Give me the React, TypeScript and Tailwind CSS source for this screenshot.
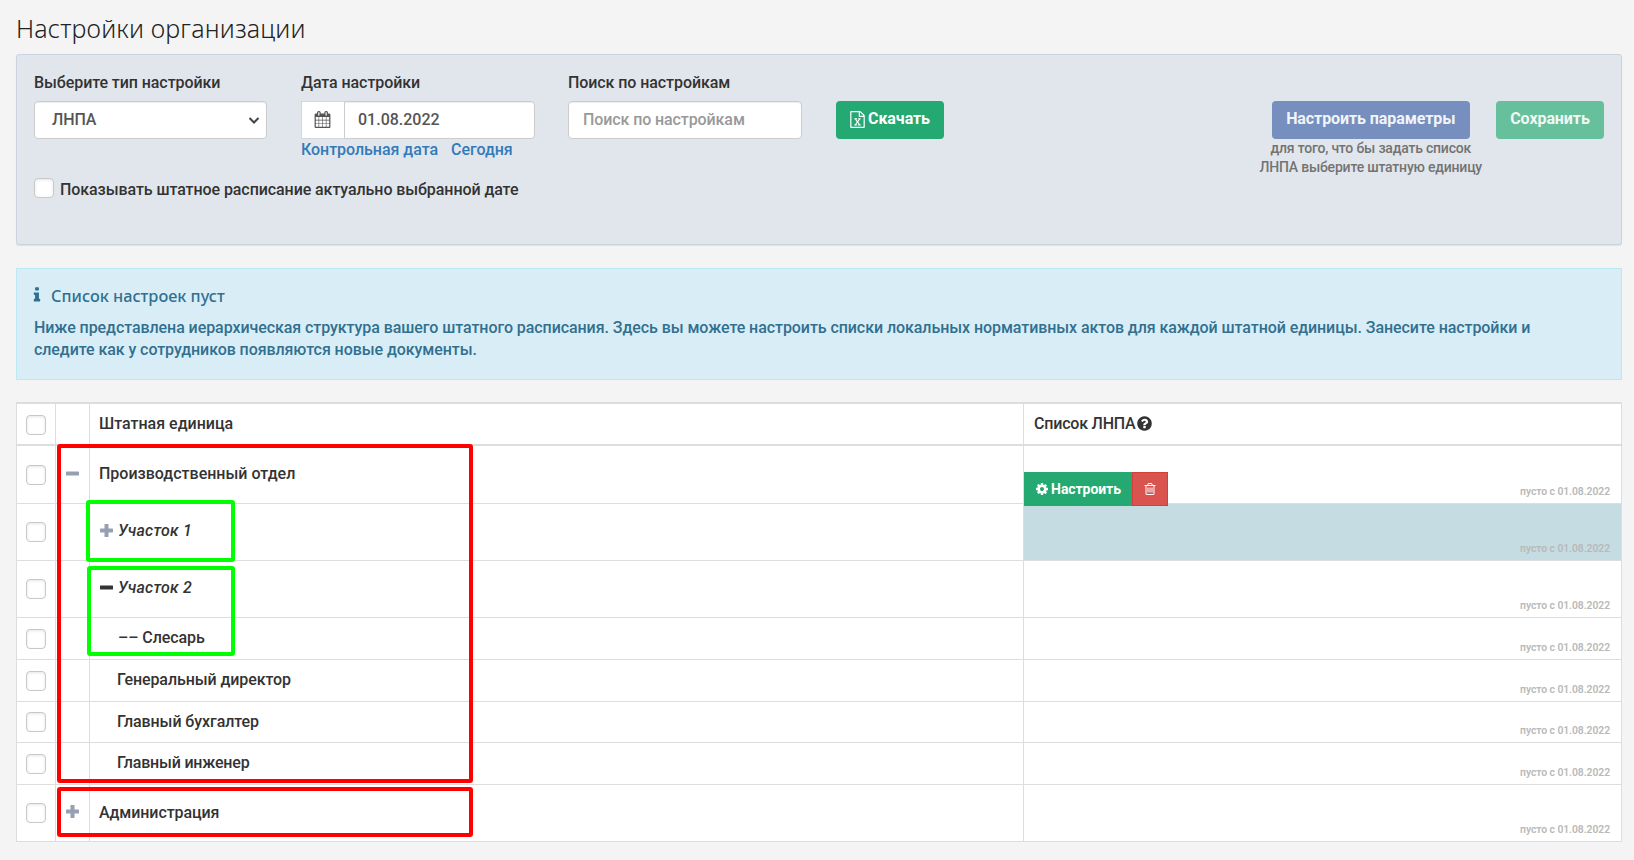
import type { ReactNode } from 'react';

const PATHS = {
  calendar:
    'M192 1664h288v-288h-288v288zm352 0h320v-288h-320v288zm-352-352h288v-320h-288v320zm352 0h320v-320h-320v320zm-352-384h288v-288h-288v288zm736 736h320v-288h-320v288zm-384-736h320v-288h-320v288zm768 736h288v-288h-288v288zm-384-352h320v-320h-320v320zm-352-864v-288q0-13-9.5-22.5t-22.5-9.5h-64q-13 0-22.5 9.5t-9.5 22.5v288q0 13 9.5 22.5t22.5 9.5h64q13 0 22.5-9.5t9.5-22.5zm736 864h288v-320h-288v320zm-384-384h320v-288h-320v288zm384 0h288v-288h-288v288zm32-480v-288q0-13-9.5-22.5t-22.5-9.5h-64q-13 0-22.5 9.5t-9.5 22.5v288q0 13 9.5 22.5t22.5 9.5h64q13 0 22.5-9.5t9.5-22.5zm384-64v1280q0 52-38 90t-90 38h-1408q-52 0-90-38t-38-90v-1280q0-52 38-90t90-38h128v-96q0-66 47-113t113-47h64q66 0 113 47t47 113v96h384v-96q0-66 47-113t113-47h64q66 0 113 47t47 113v96h128q52 0 90 38t38 90z',
  excel:
    'M1596 380q28 28 48 76t20 88v1152q0 40-28 68t-68 28h-1344q-40 0-68-28t-28-68v-1600q0-40 28-68t68-28h896q40 0 88 20t76 48zm-444-244v376h376q-10-29-22-41l-313-313q-12-12-41-22zm384 1528v-1024h-416q-40 0-68-28t-28-68v-416h-768v1536h1280zm-979-234v106h281v-106h-75l103-161q5-7 10-16.5t7.5-13.5 3.5-4h2q1 4 5 10 2 4 4.5 7.5t6 8 6.5 8.5l107 161h-76v106h291v-106h-68l-192-273 195-282h67v-107h-279v107h74l-103 159q-4 7-10 16.5t-9 13.5l-2 3h-2q-1-4-5-10-6-11-17-23l-106-159h76v-107h-290v107h68l189 272-194 283h-68z',
  info: 'M1216 1344v128q0 26-19 45t-45 19h-512q-26 0-45-19t-19-45v-128q0-26 19-45t45-19h64v-384h-64q-26 0-45-19t-19-45v-128q0-26 19-45t45-19h384q26 0 45 19t19 45v576h64q26 0 45 19t19 45zm-128-1152v192q0 26-19 45t-45 19h-256q-26 0-45-19t-19-45v-192q0-26 19-45t45-19h256q26 0 45 19t19 45z',
  question:
    'M1024 1376v-192q0-14-9-23t-23-9h-192q-14 0-23 9t-9 23v192q0 14 9 23t23 9h192q14 0 23-9t9-23zm256-672q0-88-55.5-163t-138.5-116-170-41q-243 0-371 213-15 24 8 42l132 100q7 6 19 6 16 0 25-12 53-68 86-92 34-24 86-24 48 0 85.5 26t37.5 59q0 38-20 61t-68 45q-63 28-115.5 86.5t-52.5 125.5v36q0 14 9 23t23 9h192q14 0 23-9t9-23q0-19 21.5-49.5t54.5-49.5q32-18 49-28.5t46-35 44.5-48 28-60.5 12.5-81zm384 192q0 209-103 385.5t-279.5 279.5-385.5 103-385.5-103-279.5-279.5-103-385.5 103-385.5 279.5-279.5 385.5-103 385.5 103 279.5 279.5 103 385.5z',
  cog: 'M1152 896q0-106-75-181t-181-75-181 75-75 181 75 181 181 75 181-75 75-181zm512-109v222q0 12-8 23t-20 13l-185 28q-19 54-39 91 35 50 107 138 10 12 10 25t-9 23q-27 37-99 108t-94 71q-12 0-26-9l-138-108q-44 23-91 38-16 136-29 186-7 28-36 28h-222q-14 0-24.5-8.5t-11.5-21.5l-28-184q-49-16-90-37l-141 107q-10 9-25 9-14 0-25-11-126-114-165-168-7-10-7-23 0-12 8-23 15-21 51-66.5t54-70.5q-27-50-41-99l-183-27q-13-2-21-12.5t-8-23.5v-222q0-12 8-23t19-13l186-28q14-46 39-92-40-57-107-138-10-12-10-24 0-10 9-23 26-36 98.5-107.5t94.5-71.5q13 0 26 10l138 107q44-23 91-38 16-136 29-186 7-28 36-28h222q14 0 24.5 8.5t11.5 21.5l28 184q49 16 90 37l142-107q9-9 24-9 13 0 25 10 129 119 165 170 7 8 7 22 0 12-8 23-15 21-51 66.5t-54 70.5q26 50 41 98l183 28q13 2 21 12.5t8 23.5z',
  trash:
    'M704 736v576q0 14-9 23t-23 9h-64q-14 0-23-9t-9-23v-576q0-14 9-23t23-9h64q14 0 23 9t9 23zm256 0v576q0 14-9 23t-23 9h-64q-14 0-23-9t-9-23v-576q0-14 9-23t23-9h64q14 0 23 9t9 23zm256 0v576q0 14-9 23t-23 9h-64q-14 0-23-9t-9-23v-576q0-14 9-23t23-9h64q14 0 23 9t9 23zm128 724v-948h-896v948q0 22 7 40.5t14.5 27 10.5 8.5h832q3 0 10.5-8.5t14.5-27 7-40.5zm-672-1076h448l-48-117q-7-9-17-11h-317q-10 2-17 11zm928 32v64q0 14-9 23t-23 9h-96v948q0 83-47 143.5t-113 60.5h-832q-66 0-113-58.5t-47-141.5v-952h-96q-14 0-23-9t-9-23v-64q0-14 9-23t23-9h309l70-167q15-37 54-63t79-26h320q40 0 79 26t54 63l70 167h309q14 0 23 9t9 23z',
};

interface IconProps {
  name: keyof typeof PATHS;
  className?: string;
}

const Icon = ({ name, className }: IconProps) => (
  <svg className={className} viewBox="0 0 1792 1792" fill="currentColor">
    <path d={PATHS[name]} />
  </svg>
);

const Toggle = ({ open, className }: { open: boolean; className?: string }) => (
  <svg className={className} viewBox="0 0 13 13" width="13" height="13" fill="currentColor">
    <rect x="0" y="4.5" width="13" height="4" rx="0.6" />
    {!open && <rect x="4.5" y="0" width="4" height="13" rx="0.6" />}
  </svg>
);

const Checkbox = ({ className = '' }: { className?: string }) => (
  <span
    className={`block size-5 shrink-0 rounded-[4px] border border-[#c8c8c8] bg-white shadow-[inset_0_1px_3px_rgba(0,0,0,0.1)] ${className}`}
  />
);

interface Row {
  title: string;
  height: string;
  toggle?: 'open' | 'closed';
  name: ReactNode;
  pad: string;
  active?: boolean;
}

const rows: Row[] = [
  {
    title: 'dept',
    height: 'h-[58px]',
    toggle: 'open',
    name: 'Производственный отдел',
    pad: 'pl-[9px] pb-[2px] tracking-normal',
  },
  {
    title: 'area-1',
    height: 'h-[57px]',
    name: (
      <>
        <Toggle open={false} className="mr-[5px] mb-px text-[#97a0b3]" />
        <em className="tracking-[0.2px]">Участок 1</em>
      </>
    ),
    pad: 'pl-[10px] pb-[2px]',
    active: true,
  },
  {
    title: 'area-2',
    height: 'h-[57px]',
    name: (
      <>
        <Toggle open className="mr-[5px] mb-px" />
        <em className="tracking-[0.2px]">Участок 2</em>
      </>
    ),
    pad: 'pl-[10px] pb-[2px]',
  },
  { title: 'fitter', height: 'h-[42px]', name: '–– Слесарь', pad: 'pl-[28px] pb-[2px]' },
  { title: 'ceo', height: 'h-[42px]', name: 'Генеральный директор', pad: 'pl-[27px] pb-[2px]' },
  { title: 'accountant', height: 'h-[41px]', name: 'Главный бухгалтер', pad: 'pl-[27px]' },
  { title: 'engineer', height: 'h-[42px]', name: 'Главный инженер', pad: 'pl-[27px] pb-[2px] tracking-[-0.2px]' },
  { title: 'admin', height: 'h-[57px]', toggle: 'closed', name: 'Администрация', pad: 'pl-[9px]' },
];

const SettingsPanel = () => (
  <section className="flex h-[191px] rounded-[3px] border border-[#ccd3e0] bg-[#e1e6ed] pt-[17px] pr-[17px] pl-[17px] shadow-[0_1px_1px_rgba(0,0,0,0.08)]">
    <div className="w-[267px]">
      <div className="h-[29px] leading-[22px]">Выберите тип настройки</div>
      <div className="flex h-[38px] w-[233px] items-center justify-between rounded-[4px] border border-[#ccc] bg-white pr-[6px] pl-[17px] text-[#555] shadow-[inset_0_1px_1px_rgba(0,0,0,0.075)]">
        <span>ЛНПА</span>
        <svg width="12" height="12" viewBox="0 0 12 12" fill="none" stroke="#444" strokeWidth="2">
          <path d="M1.5 4l4.5 4.5L10.5 4" />
        </svg>
      </div>
      <label className="mt-[38px] flex w-[520px] items-start whitespace-nowrap">
        <Checkbox className="mt-px mr-[6px]" />
        <span className="pt-[2px] leading-[22px]">Показывать штатное расписание актуально выбранной дате</span>
      </label>
    </div>

    <div className="w-[267px]">
      <div className="h-[29px] leading-[22px]">Дата настройки</div>
      <div className="flex h-[38px] w-[234px] text-[#555]">
        <span className="flex w-[43px] items-center justify-center border border-r-0 border-[#d2d6de] bg-white">
          <Icon name="calendar" className="mr-px mb-[2px] size-[17px]" />
        </span>
        <span className="flex flex-1 items-center rounded-r-[4px] border border-[#ccc] bg-white pl-[13px] tracking-normal shadow-[inset_0_1px_1px_rgba(0,0,0,0.075)]">
          01.08.2022
        </span>
      </div>
      <div className="flex gap-[13px] leading-[22px] tracking-[-0.04px] text-[#337ab7]">
        <a>Контрольная дата</a>
        <a>Сегодня</a>
      </div>
    </div>

    <div className="w-[268px]">
      <div className="h-[29px] leading-[22px]">Поиск по настройкам</div>
      <div className="flex h-[38px] w-[234px] items-center rounded-[4px] border border-[#ccc] bg-white pl-[14px] tracking-[-0.1px] text-[#999] shadow-[inset_0_1px_1px_rgba(0,0,0,0.075)]">
        Поиск по настройкам
      </div>
    </div>

    <button className="mt-[29px] flex h-[38px] w-[108px] items-center justify-center rounded-[4px] bg-[#23a971] pb-[3px] font-bold text-white">
      <Icon name="excel" className="mt-px mr-[2px] -ml-px size-[17px]" />
      Скачать
    </button>

    <div className="mt-[29px] ml-auto flex">
      <div className="mr-[14px] flex flex-col items-center">
        <button className="h-[38px] w-[198px] rounded-[4px] bg-[#768fbf] pb-[3px] font-bold text-[#f1f4f8]">
          Настроить параметры
        </button>
        <p className="text-center text-[14px] leading-[18.5px] tracking-[-0.2px] text-[#737373]">
          для того, что бы задать список
          <br />
          ЛНПА выберите штатную единицу
        </p>
      </div>
      <button className="h-[38px] w-[108px] rounded-[4px] bg-[#66c09c] pb-[3px] font-bold text-[#f1f8f5]">
        Сохранить
      </button>
    </div>
  </section>
);

const InfoCallout = () => (
  <section className="mt-[23px] h-[112px] border border-[#bce8f1] bg-[#d9edf7] px-[17px] pt-[16px] text-[#31708f]">
    <h4 className="flex items-center font-['Noto_Sans'] text-[16.3px] leading-[22px] tracking-normal">
      <Icon name="info" className="mr-[5px] mb-[2px] -ml-[6px] size-[18px]" />
      Список настроек пуст
    </h4>
    <p className="mt-[10px] leading-[22px] tracking-[-0.07px]">
      Ниже представлена иерархическая структура вашего штатного расписания. Здесь вы можете настроить списки локальных
      нормативных актов для каждой штатной единицы. Занесите настройки и
      <br />
      следите как у сотрудников появляются новые документы.
    </p>
  </section>
);

const UnitsTable = () => (
  <section className="relative mt-[22px] border-x border-t-2 border-[#ddd] bg-white">
    <div className="flex h-[42px] border-b-2 border-[#ddd]">
      <div className="flex w-[39px] items-center justify-center border-r border-[#ddd] pt-[2px]">
        <Checkbox />
      </div>
      <div className="w-[34px] border-r border-[#ddd]" />
      <div className="flex w-[934px] items-center border-r border-[#ddd] pl-[9px] tracking-normal">Штатная единица</div>
      <div className="flex flex-1 items-center pl-[10px] tracking-[-0.2px]">
        Список ЛНПА
        <Icon name="question" className="mb-[2px] ml-px size-[17px]" />
      </div>
    </div>

    {rows.map((row) => (
      <div key={row.title} className={`flex border-b border-[#ddd] ${row.height}`}>
        <div className="flex w-[39px] items-center justify-center border-r border-[#ddd]">
          <Checkbox />
        </div>
        <div className="flex w-[34px] items-center justify-center border-r border-[#ddd] pb-[3px] text-[#97a0b3]">
          {row.toggle && <Toggle open={row.toggle === 'open'} />}
        </div>
        <div className={`flex w-[934px] items-center border-r border-[#ddd] ${row.pad}`}>{row.name}</div>
        <div
          className={`flex flex-1 items-end justify-end pr-[11px] pb-[4px] text-[10.4px] leading-[15px] font-semibold text-[#b9b9b9] ${row.active ? 'bg-[#c5dce2]' : ''}`}
        >
          пусто с 01.08.2022
        </div>
      </div>
    ))}

    <div className="absolute top-[68px] left-[1007px] flex h-[34px] text-[14px] font-bold text-white">
      <button className="flex w-[108px] items-center justify-center bg-[#23a971]">
        <Icon name="cog" className="mr-[2px] size-[14px]" />
        Настроить
      </button>
      <button className="flex w-[36px] items-center justify-center border border-[#d43f3a] bg-[#d9534f]">
        <Icon name="trash" className="size-[14px]" />
      </button>
    </div>

    {/* Highlight frames */}
    <div className="absolute top-[40px] left-[40px] h-[339px] w-[416px] rounded-[3px] border-4 border-[#ff0000]" />
    <div className="absolute top-[383px] left-[40px] h-[50px] w-[416px] rounded-[3px] border-4 border-[#ff0000]" />
    <div className="absolute top-[96px] left-[69px] h-[62px] w-[149px] rounded-[3px] border-4 border-[#00ff00]" />
    <div className="absolute top-[162px] left-[70px] h-[90px] w-[148px] rounded-[3px] border-4 border-[#00ff00]" />
  </section>
);

export default function App() {
  return (
    <main className="h-[860px] overflow-hidden bg-[#f4f4f4] pr-[12px] pl-[16px] font-[Roboto,sans-serif] text-[16px] font-medium tracking-[-0.08px] text-[#333]">
      <h1 className="h-[54px] pt-[12px] font-['Noto_Sans'] text-[25px] leading-[32px] font-[350] tracking-[0.18px] text-[#222]">
        Настройки организации
      </h1>
      <SettingsPanel />
      <InfoCallout />
      <UnitsTable />
    </main>
  );
}
